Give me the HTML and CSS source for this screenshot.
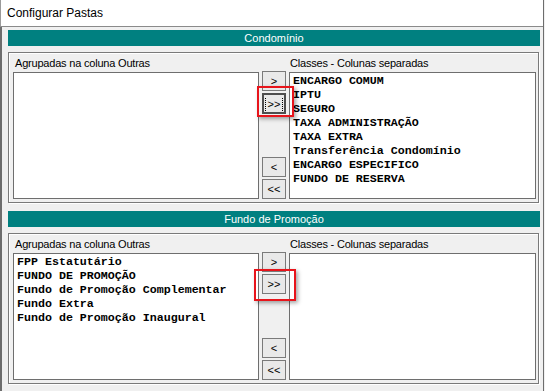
FILE: index.html
```html
<!DOCTYPE html>
<html lang="pt-BR">
<head>
    <meta charset="UTF-8">
    <title>Configurar Pastas</title>
    <link rel="stylesheet" href="styles.css">
</head>
<body>

<div class="window">
    <!-- Title bar -->
    <div class="titlebar">Configurar Pastas</div>

    <div class="content">
        <!-- Condominio -->
        <div class="section-title">Condomínio</div>
        <div class="group">
            <div class="col-label left-label">Agrupadas na coluna Outras</div>
            <div></div>
            <div class="col-label">Classes - Colunas separadas</div>

            <div class="listbox"></div>
            <div class="buttons">
                <div class="btn-top">
                    <button class="btn">&gt;</button>
                    <button class="btn focused"><span class="focus-rect">&gt;&gt;</span></button>
                </div>
                <div class="btn-bottom">
                    <button class="btn">&lt;</button>
                    <button class="btn">&lt;&lt;</button>
                </div>
                <span class="highlight hl-one"></span>
            </div>
            <div class="listbox">
                <div class="item">ENCARGO COMUM</div>
                <div class="item">IPTU</div>
                <div class="item">SEGURO</div>
                <div class="item">TAXA ADMINISTRAÇÃO</div>
                <div class="item">TAXA EXTRA</div>
                <div class="item">Transferência Condomínio</div>
                <div class="item">ENCARGO ESPECIFICO</div>
                <div class="item">FUNDO DE RESERVA</div>
            </div>
        </div>

        <!-- Fundo de Promocao -->
        <div class="section-title second">Fundo de Promoção</div>
        <div class="group">
            <div class="col-label left-label">Agrupadas na coluna Outras</div>
            <div></div>
            <div class="col-label">Classes - Colunas separadas</div>

            <div class="listbox">
                <div class="item">FPP Estatutário</div>
                <div class="item">FUNDO DE PROMOÇÃO</div>
                <div class="item">Fundo de Promoção Complementar</div>
                <div class="item">Fundo Extra</div>
                <div class="item">Fundo de Promoção Inaugural</div>
            </div>
            <div class="buttons">
                <div class="btn-top">
                    <button class="btn">&gt;</button>
                    <button class="btn">&gt;&gt;</button>
                </div>
                <div class="btn-bottom">
                    <button class="btn">&lt;</button>
                    <button class="btn">&lt;&lt;</button>
                </div>
                <span class="highlight hl-two"></span>
            </div>
            <div class="listbox"></div>
        </div>
    </div>
</div>

</body>
</html>
```

FILE: styles.css
```css
body {
    margin: 0;
    background-color: #f0f0f0;
    font-family: "Liberation Sans", Arial, sans-serif;
    font-size: 11px;
    color: #000;
    overflow: hidden;
}
.window {
    width: 544px;
    height: 391px;
    box-sizing: border-box;
    border-right: 1px solid #6d6d6d;
    background-color: #f0f0f0;
}
.titlebar {
    height: 27px;
    box-sizing: border-box;
    padding: 1px 0 0 6px;
    line-height: 25px;
    font-size: 12px;
    background-color: #fff;
    border-bottom: 1px solid #8a8a8a;
    border-left: 1px solid #9a9a9a;
}
.content {
    border-left: 2px solid #6d6d6d;
    padding: 3px 3px 0 6px;
    height: 364px;
}
.section-title {
    height: 16px;
    line-height: 16px;
    background-color: #008080; /* teal header */
    color: #fff;
    text-align: center;
    margin-bottom: 6px;
}
.section-title.second {
    margin-top: 8px;
}
.group {
    width: 531px;
    box-sizing: border-box;
    border: 1px solid #7a7a7a;
    box-shadow: inset 1px 1px 0 #fff, 1px 1px 0 #fff;
    padding: 3px 2px 3px 4px;
    display: grid;
    grid-template-columns: 246px 24px 247px;
    grid-template-rows: 14px 127px;
    column-gap: 3px;
    row-gap: 2px;
}
.col-label {
    line-height: 14px;
    letter-spacing: -0.2px;
    white-space: nowrap;
    padding-left: 1px;
}
.left-label {
    padding-left: 2px;
}
.listbox {
    background-color: #fff;
    border: 1px solid #6e6e6e;
    padding: 1px 3px;
    font-family: "Liberation Mono", "Courier New", monospace;
    font-weight: bold;
    font-size: 11.65px;
}
.item {
    height: 14px;
    line-height: 14px;
    white-space: nowrap;
}
.buttons {
    position: relative;
    display: flex;
    flex-direction: column;
    justify-content: space-between;
}
.btn-top, .btn-bottom {
    display: flex;
    flex-direction: column;
    gap: 2px;
}
.btn-top {
    margin-top: -1px;
}
.btn {
    width: 24px;
    height: 20px;
    padding: 0;
    margin: 0;
    box-sizing: border-box;
    border: 1px solid #7a7a7a;
    background-color: #e9e9e9;
    font-family: "Liberation Sans", Arial, sans-serif;
    font-size: 11px;
    color: #000;
    line-height: 16px;
}
.btn.focused {
    border: 2px solid #4e4e4e;
    height: 21px;
}
.focus-rect {
    display: inline-block;
    padding: 0 2px;
    line-height: 13px;
    border-left: 1px dotted #000;
    border-right: 1px dotted #000;
}
/* Red annotation boxes drawn on top of the buttons */
.highlight {
    position: absolute;
    border: 2px solid #e8141b;
    box-shadow: 2px 2px 4px rgba(0, 0, 0, 0.35);
    box-sizing: border-box;
}
.hl-one {
    left: -5px;
    top: 14px;
    width: 37px;
    height: 31px;
}
.hl-two {
    left: -8px;
    top: 16px;
    width: 42px;
    height: 32px;
}
```
